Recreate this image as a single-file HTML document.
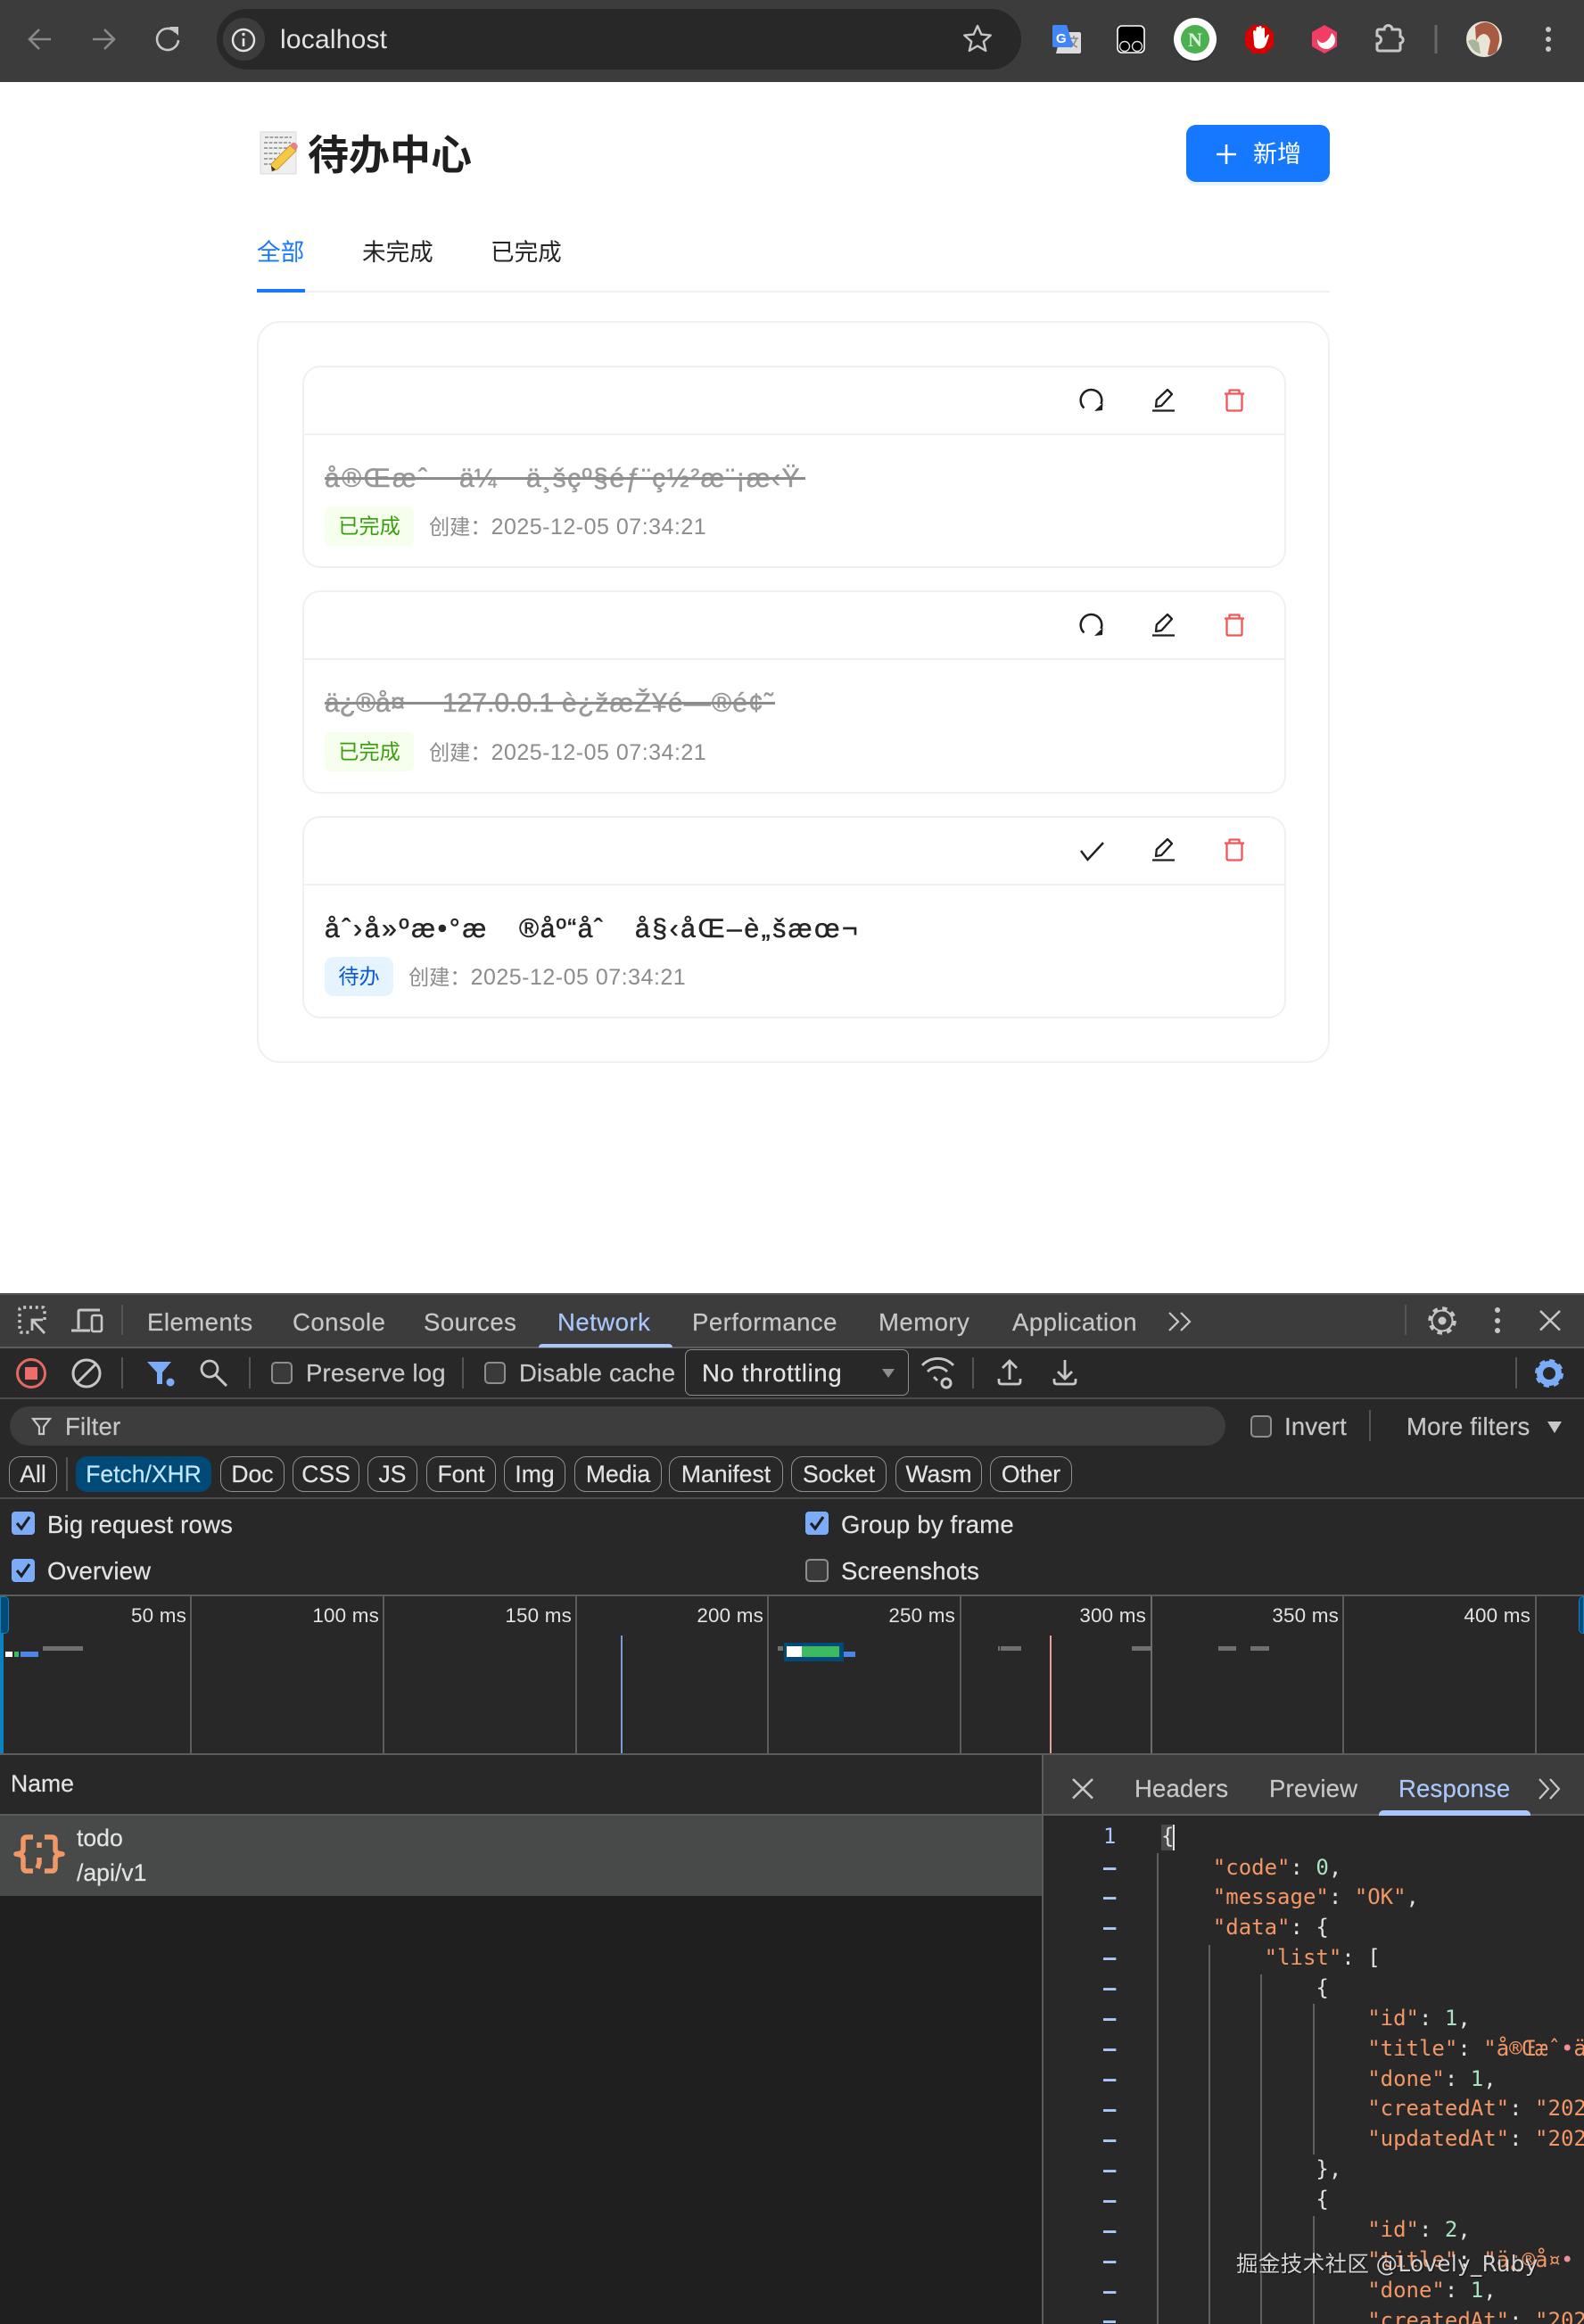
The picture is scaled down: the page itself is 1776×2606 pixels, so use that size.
<!DOCTYPE html>
<html lang="zh"><head><meta charset="utf-8"><title>localhost</title>
<style>
html,body{margin:0;padding:0;background:#fff}
body{position:relative;width:1776px;height:2606px;overflow:hidden;font-family:"Liberation Sans","Noto Sans CJK SC",sans-serif}
.b{position:absolute;box-sizing:border-box}
.t{position:absolute;white-space:pre;line-height:40px;height:40px}
.d{font-size:27.5px;color:#c7c7c7;letter-spacing:.2px;-webkit-text-stroke:.2px currentColor}
.tab{letter-spacing:.5px}
.w{color:#e3e3e3;-webkit-text-stroke:.2px currentColor}
.card{position:absolute;left:339px;width:1103px;box-sizing:border-box;border:2px solid #f0f0f0;border-radius:20px;background:#fff}
.m{font-size:30px;-webkit-text-stroke:.5px currentColor}
.g{color:#999}
.k3{color:#262626}
.strike{position:absolute;height:3px;background:#8c8c8c}
.tag{position:absolute;left:364px;height:44px;line-height:44px;font-size:23.2px;text-align:center;border-radius:7px}
.tg{width:100px;background:#f6ffed;color:#389e0d}
.tb{width:77px;background:#e6f4ff;color:#0958d9;border-radius:10px}
.cr{font-size:23.2px;color:#8c8c8c}
.cr span{font-size:25px;letter-spacing:.5px}
.chip{position:absolute;top:1633px;height:40px;line-height:39px;box-sizing:border-box;border:1.5px solid #8e8e8e;border-radius:13px;text-align:center;font-size:26.5px;color:#e3e3e3;-webkit-text-stroke:.2px currentColor}
.cb{position:absolute;box-sizing:border-box;width:24px;height:25px;border:2px solid #8e8e8e;border-radius:5px;background:#3a3a3a}
.cc{position:absolute;box-sizing:border-box;width:26px;height:26px;border-radius:4px;background:#7cacf8}
.v{position:absolute;width:2px;background:#5c5c5c}
.o{font-size:22.4px;letter-spacing:.2px;color:#e3e3e3;text-align:right;width:90px;top:1792px}
.r{position:absolute}
#code{position:absolute;left:1302px;top:0;width:474px;height:2606px;overflow:hidden;font-family:"DejaVu Sans Mono","Liberation Mono",monospace;font-size:24px}
.l{position:absolute;left:0;white-space:pre;line-height:34px;height:34px;color:#e3e3e3}
.k{color:#f29766}.n{color:#a8e2c0}.p{color:#f28b9a}
.ln{position:absolute;left:1237px;font-family:"DejaVu Sans Mono","Liberation Mono",monospace;font-size:23.8px;font-weight:700;line-height:34px;height:34px;color:#a8c7fa}
</style></head><body>

<!-- browser chrome -->
<div class="b" style="left:0;top:0;width:1776px;height:92px;background:#3c3c3c"></div>
<div class="b" style="left:243px;top:10px;width:902px;height:68px;background:#282828;border-radius:34px"></div>
<div class="b" style="left:250px;top:20px;width:47px;height:48px;background:#3c3c3c;border-radius:24px"></div>
<div class="t" style="left:314px;top:25px;font-size:30px;color:#e3e3e3;letter-spacing:.2px">localhost</div>

<!-- page -->
<div class="t" style="left:345px;top:150px;font-size:46px;line-height:48px;height:48px;font-weight:700;color:#1f1f1f">待办中心</div>
<div class="b" style="left:1330px;top:140px;width:161px;height:64px;background:#1677ff;border-radius:11px;box-shadow:0 4px 0 #e6f4ff"></div>
<div class="t" style="left:1405px;top:153px;font-size:27px;color:#fff">新增</div>
<div class="t" style="left:288px;top:263px;font-size:26.6px;color:#1677ff">全部</div>
<div class="t" style="left:406px;top:263px;font-size:26.6px;color:#262626">未完成</div>
<div class="t" style="left:550px;top:263px;font-size:26.6px;color:#262626">已完成</div>
<div class="b" style="left:288px;top:326px;width:1203px;height:2px;background:#f0f0f0"></div>
<div class="b" style="left:288px;top:324px;width:54px;height:4px;background:#1677ff"></div>

<div class="b" style="left:288px;top:360px;width:1203px;height:832px;border:2px solid #f0f0f0;border-radius:26px;background:#fff"></div>

<div class="card" style="top:410px;height:227px"></div>
<div class="b" style="left:340px;top:486px;width:1101px;height:2px;background:#f0f0f0"></div>
<div class="t m g" style="left:364px;top:517px;letter-spacing:2.4px">å®Œæˆ</div>
<div class="t m g" style="left:515px;top:517px">ä¼</div>
<div class="t m g" style="left:590px;top:517px;letter-spacing:1.5px">ä¸šçº§éƒ¨ç½²æ¨¡æ‹Ÿ</div>
<div class="strike" style="left:364px;top:535px;width:539px"></div>
<div class="tag tg" style="top:568px">已完成</div>
<div class="t cr" style="left:481px;top:571px">创建：<span>2025-12-05 07:34:21</span></div>

<div class="card" style="top:662px;height:228px"></div>
<div class="b" style="left:340px;top:738px;width:1101px;height:2px;background:#f0f0f0"></div>
<div class="t m g" style="left:364px;top:769px">ä¿®å¤</div>
<div class="t m g" style="left:496px;top:769px">127.0.0.1</div>
<div class="t m g" style="left:630px;top:769px;letter-spacing:1.2px">è¿žæŽ¥é—®é¢˜</div>
<div class="strike" style="left:364px;top:787px;width:505px"></div>
<div class="tag tg" style="top:821px">已完成</div>
<div class="t cr" style="left:481px;top:824px">创建：<span>2025-12-05 07:34:21</span></div>

<div class="card" style="top:915px;height:227px"></div>
<div class="b" style="left:340px;top:991px;width:1101px;height:2px;background:#f0f0f0"></div>
<div class="t m k3" style="left:364px;top:1022px;letter-spacing:2.7px">åˆ›å»ºæ•°æ</div>
<div class="t m k3" style="left:582px;top:1022px;letter-spacing:1.5px">®åº“åˆ</div>
<div class="t m k3" style="left:712px;top:1022px;letter-spacing:2.6px">å§‹åŒ–è„šæœ¬</div>
<div class="tag tb" style="top:1073px">待办</div>
<div class="t cr" style="left:458px;top:1076px">创建：<span>2025-12-05 07:34:21</span></div>

<!-- devtools backgrounds -->
<div class="b" style="left:0;top:1450px;width:1776px;height:1156px;background:#282828"></div>
<div class="b" style="left:0;top:1450px;width:1776px;height:60px;background:#3c3c3c"></div>
<div class="b" style="left:0;top:1450px;width:1776px;height:2px;background:#555"></div>
<div class="b" style="left:0;top:1510px;width:1776px;height:2px;background:#5c5c5c"></div>
<div class="b" style="left:0;top:1567px;width:1776px;height:2px;background:#4c4c4c"></div>
<div class="b" style="left:0;top:1679px;width:1776px;height:2px;background:#4c4c4c"></div>
<div class="b" style="left:0;top:1788px;width:1776px;height:2px;background:#5c5c5c"></div>
<div class="b" style="left:0;top:1966px;width:1776px;height:2px;background:#5c5c5c"></div>

<div class="t d tab" style="left:165px;top:1463px">Elements</div>
<div class="t d tab" style="left:328px;top:1463px">Console</div>
<div class="t d tab" style="left:475px;top:1463px">Sources</div>
<div class="t d tab" style="left:625px;top:1463px;color:#a8c7fa">Network</div>
<div class="t d tab" style="left:776px;top:1463px">Performance</div>
<div class="t d tab" style="left:985px;top:1463px">Memory</div>
<div class="t d tab" style="left:1135px;top:1463px">Application</div>
<div class="b" style="left:604px;top:1507px;width:150px;height:4px;background:#a8c7fa;border-radius:4px 4px 0 0"></div>

<div class="cb" style="left:304px;top:1527px"></div>
<div class="t d" style="left:343px;top:1520px">Preserve log</div>
<div class="cb" style="left:543px;top:1527px"></div>
<div class="t d" style="left:582px;top:1520px">Disable cache</div>
<div class="b" style="left:768px;top:1513px;width:251px;height:52px;border:1.5px solid #8e8e8e;border-radius:7px"></div>
<div class="t d" style="left:787px;top:1520px;color:#e3e3e3;letter-spacing:.7px">No throttling</div>

<div class="b" style="left:11px;top:1577px;width:1363px;height:44px;background:#3d3d3d;border-radius:22px"></div>
<div class="t d" style="left:73px;top:1580px">Filter</div>
<div class="cb" style="left:1402px;top:1587px"></div>
<div class="t d" style="left:1440px;top:1580px">Invert</div>
<div class="t d" style="left:1577px;top:1580px">More filters</div>

<div class="chip" style="left:10px;width:54px">All</div>
<div class="chip" style="left:85px;width:152px;background:#004a77;border-color:#004a77;color:#c2e7ff">Fetch/XHR</div>
<div class="chip" style="left:247px;width:72px">Doc</div>
<div class="chip" style="left:328px;width:75px">CSS</div>
<div class="chip" style="left:412px;width:56px">JS</div>
<div class="chip" style="left:478px;width:78px">Font</div>
<div class="chip" style="left:565px;width:69px">Img</div>
<div class="chip" style="left:644px;width:98px">Media</div>
<div class="chip" style="left:750px;width:128px">Manifest</div>
<div class="chip" style="left:887px;width:107px">Socket</div>
<div class="chip" style="left:1004px;width:97px">Wasm</div>
<div class="chip" style="left:1110px;width:92px">Other</div>

<div class="cc" style="left:13px;top:1695px"></div>
<div class="t d" style="left:53px;top:1690px;color:#e3e3e3">Big request rows</div>
<div class="cc" style="left:13px;top:1748px"></div>
<div class="t d" style="left:53px;top:1742px;color:#e3e3e3">Overview</div>
<div class="cc" style="left:903px;top:1695px"></div>
<div class="t d" style="left:943px;top:1690px;color:#e3e3e3">Group by frame</div>
<div class="cb" style="left:903px;top:1748px;width:26px;height:26px"></div>
<div class="t d" style="left:943px;top:1742px;color:#e3e3e3">Screenshots</div>

<!-- overview -->
<div class="v" style="left:213px;top:1790px;height:176px"></div>
<div class="v" style="left:429px;top:1790px;height:176px"></div>
<div class="v" style="left:645px;top:1790px;height:176px"></div>
<div class="v" style="left:860px;top:1790px;height:176px"></div>
<div class="v" style="left:1076px;top:1790px;height:176px"></div>
<div class="v" style="left:1290px;top:1790px;height:176px;background:#6c6c6c"></div>
<div class="v" style="left:1505px;top:1790px;height:176px"></div>
<div class="v" style="left:1721px;top:1790px;height:176px"></div>
<div class="t o" style="left:119px">50 ms</div>
<div class="t o" style="left:335px">100 ms</div>
<div class="t o" style="left:551px">150 ms</div>
<div class="t o" style="left:766px">200 ms</div>
<div class="t o" style="left:981px">250 ms</div>
<div class="t o" style="left:1195px">300 ms</div>
<div class="t o" style="left:1411px">350 ms</div>
<div class="t o" style="left:1626px">400 ms</div>

<div class="r" style="left:0;top:1790px;width:4px;height:176px;background:#0a82c4"></div>
<div class="r" style="left:0;top:1790px;width:10px;height:42px;background:#004a77;border:1px solid #0a82c4;box-sizing:border-box;border-radius:0 5px 5px 0"></div>
<div class="r" style="left:1770px;top:1790px;width:6px;height:42px;background:#004a77;border:1px solid #0a82c4;box-sizing:border-box;border-radius:5px 0 0 5px"></div>
<div class="r" style="left:6px;top:1852px;width:8px;height:6px;background:#fff"></div>
<div class="r" style="left:16px;top:1852px;width:5px;height:6px;background:#3dbb63"></div>
<div class="r" style="left:23px;top:1852px;width:20px;height:6px;background:#4d84e6"></div>
<div class="r" style="left:48px;top:1846px;width:45px;height:5px;background:#707070"></div>
<div class="r" style="left:696px;top:1834px;width:2px;height:132px;background:#7b9bd9"></div>
<div class="r" style="left:1177px;top:1834px;width:2px;height:132px;background:#e8a09a"></div>
<div class="r" style="left:872px;top:1846px;width:6px;height:5px;background:#707070"></div>
<div class="r" style="left:879px;top:1842px;width:67px;height:21px;background:#004a77"></div>
<div class="r" style="left:882px;top:1846px;width:17px;height:12px;background:#fff"></div>
<div class="r" style="left:899px;top:1846px;width:42px;height:12px;background:#3dbb63"></div>
<div class="r" style="left:946px;top:1852px;width:13px;height:6px;background:#4d84e6"></div>
<div class="r" style="left:1119px;top:1846px;width:2px;height:5px;background:#707070"></div>
<div class="r" style="left:1122px;top:1846px;width:23px;height:5px;background:#707070"></div>
<div class="r" style="left:1269px;top:1846px;width:22px;height:5px;background:#707070"></div>
<div class="r" style="left:1366px;top:1846px;width:20px;height:5px;background:#707070"></div>
<div class="r" style="left:1402px;top:1846px;width:21px;height:5px;background:#707070"></div>

<!-- name list -->
<div class="b" style="left:0;top:2036px;width:1169px;height:570px;background:#1f1f1f"></div>
<div class="b" style="left:0;top:2034px;width:1776px;height:2px;background:#5c5c5c"></div>
<div class="b" style="left:0;top:2036px;width:1169px;height:90px;background:#484a4a"></div>
<div class="t w" style="left:12px;top:1980px;font-size:26.6px">Name</div>
<div class="t w" style="left:86px;top:2041px;font-size:26.6px">todo</div>
<div class="t w" style="left:86px;top:2080px;font-size:26.6px">/api/v1</div>

<!-- right panel -->
<div class="b" style="left:1170px;top:1968px;width:606px;height:66px;background:#3c3c3c"></div>
<div class="b" style="left:1168px;top:1968px;width:2px;height:638px;background:#5c5c5c"></div>
<div class="t d" style="left:1272px;top:1986px">Headers</div>
<div class="t d" style="left:1423px;top:1986px">Preview</div>
<div class="t d" style="left:1568px;top:1986px;color:#a8c7fa">Response</div>
<div class="b" style="left:1546px;top:2030px;width:170px;height:6px;background:#a8c7fa;border-radius:5px 5px 0 0"></div>

<!-- indent guides -->
<div class="r" style="left:1297px;top:2078px;width:2px;height:528px;background:#5f5f5f"></div>
<div class="r" style="left:1355px;top:2181px;width:2px;height:425px;background:#5f5f5f"></div>
<div class="r" style="left:1413px;top:2214px;width:2px;height:392px;background:#5f5f5f"></div>
<div class="r" style="left:1472px;top:2247px;width:2px;height:169px;background:#5f5f5f"></div>
<div class="r" style="left:1472px;top:2485px;width:2px;height:121px;background:#5f5f5f"></div>
<div class="r" style="left:1302px;top:2046px;width:14px;height:29px;background:#4a4a4a"></div>
<div class="r" style="left:1315px;top:2046px;width:2px;height:29px;background:#e3e3e3"></div>

<div class="ln" style="top:2042px;font-weight:400">1</div>
<div class="ln" style="top:2077px">–</div>
<div class="ln" style="top:2110px">–</div>
<div class="ln" style="top:2144px">–</div>
<div class="ln" style="top:2178px">–</div>
<div class="ln" style="top:2212px">–</div>
<div class="ln" style="top:2246px">–</div>
<div class="ln" style="top:2280px">–</div>
<div class="ln" style="top:2314px">–</div>
<div class="ln" style="top:2348px">–</div>
<div class="ln" style="top:2382px">–</div>
<div class="ln" style="top:2416px">–</div>
<div class="ln" style="top:2450px">–</div>
<div class="ln" style="top:2484px">–</div>
<div class="ln" style="top:2518px">–</div>
<div class="ln" style="top:2552px">–</div>
<div class="ln" style="top:2585px;height:21px;overflow:hidden">–</div>

<div id="code">
<div class="l" style="top:2042px">{</div>
<div class="l" style="top:2077px">    <span class="k">"code"</span>: <span class="n">0</span>,</div>
<div class="l" style="top:2110px">    <span class="k">"message"</span>: <span class="k">"OK"</span>,</div>
<div class="l" style="top:2144px">    <span class="k">"data"</span>: {</div>
<div class="l" style="top:2178px">        <span class="k">"list"</span>: [</div>
<div class="l" style="top:2212px">            {</div>
<div class="l" style="top:2246px">                <span class="k">"id"</span>: <span class="n">1</span>,</div>
<div class="l" style="top:2280px">                <span class="k">"title"</span>: <span class="k">"å®Œæˆ</span><span class="p">•</span><span class="k">ä</span></div>
<div class="l" style="top:2314px">                <span class="k">"done"</span>: <span class="n">1</span>,</div>
<div class="l" style="top:2347px">                <span class="k">"createdAt"</span>: <span class="k">"202</span></div>
<div class="l" style="top:2381px">                <span class="k">"updatedAt"</span>: <span class="k">"202</span></div>
<div class="l" style="top:2415px">            },</div>
<div class="l" style="top:2449px">            {</div>
<div class="l" style="top:2483px">                <span class="k">"id"</span>: <span class="n">2</span>,</div>
<div class="l" style="top:2517px">                <span class="k">"title"</span>: <span class="k">"ä¿®å¤</span><span class="p">•</span></div>
<div class="l" style="top:2551px">                <span class="k">"done"</span>: <span class="n">1</span>,</div>
<div class="l" style="top:2585px;height:21px;overflow:hidden">                <span class="k">"createdAt"</span>: <span class="k">"202</span></div>
</div>

<div class="t" style="left:1386px;top:2519px;font-size:24.5px;color:#d4d4d4;text-shadow:1px 1px 1px #111;letter-spacing:.4px">掘金技术社区 <span style='font-family:"DejaVu Sans",sans-serif'>@Lovely_Ruby</span></div>

<!-- icon overlay -->
<svg class="r" style="left:0;top:0" width="1776" height="2606" viewBox="0 0 1776 2606" fill="none">
<!-- chrome nav -->
<g stroke="#8a8a8a" stroke-width="2.6">
<path d="M57 44H34M44 33 33 44l11 11"/>
<path d="M104 44h23M117 33l11 11-11 11"/>
</g>
<g stroke="#c7c7c7" stroke-width="2.6">
<path d="M197 36a12 12 0 1 0 3 9"/>
</g>
<path d="M190 30h10v10z" fill="#c7c7c7"/>
<circle cx="273" cy="45" r="12" stroke="#e3e3e3" stroke-width="2.4"/>
<path d="M273 43v9" stroke="#e3e3e3" stroke-width="2.6"/><circle cx="273" cy="38.5" r="1.7" fill="#e3e3e3"/>
<path d="M1096 29l4.3 9.6 10.4 1-7.9 7 2.4 10.3-9.2-5.4-9.2 5.4 2.4-10.3-7.9-7 10.4-1z" stroke="#c7c7c7" stroke-width="2.4" stroke-linejoin="round"/>
<!-- extensions -->
<path d="M1190 36h20q2 0 2 2v20q0 2-2 2h-26z" fill="#dcdcdc"/>
<path d="M1199 43h10M1204 40v3M1207 43q-2 7-7 10M1201 46q2 5 7 7" stroke="#888" stroke-width="1.5"/>
<path d="M1180 30q0-2 2-2h14l7 23 -1 2h-20q-2 0-2-2z" fill="#4285f4"/>
<text x="1184" y="48" font-family="Liberation Sans" font-weight="700" font-size="15" fill="#fff">G</text>
<rect x="1253" y="29" width="30" height="30" rx="5" fill="#000" stroke="#fff" stroke-width="1.6"/>
<circle cx="1261" cy="52" r="5.5" stroke="#ddd" stroke-width="1.4"/><circle cx="1275" cy="52" r="5.5" stroke="#ddd" stroke-width="1.4"/>
<circle cx="1340" cy="46" r="24" fill="#000" opacity=".2"/>
<circle cx="1340" cy="44" r="24" fill="#fff"/><circle cx="1340" cy="44" r="16" fill="#4caf50"/>
<text x="1340" y="52" text-anchor="middle" font-family="Liberation Serif" font-weight="700" font-size="22" fill="#dff5df">N</text>
<path d="M1405 28h14l9 9v14l-9 9h-14l-9-9V37z" fill="#d80000"/>
<path d="M1405 36q0-2 1.500-2t1.500 2l.5-4q0-2 1.500-2t1.500 2v-1q0-2 1.500-2t1.500 2l.5 2q0-2 1.500-2t1.500 2v9q0 1 1 0l2-3q1.500-1 2 .5l-3 9q-2 6-7 6h-2q-5 0-5-6z" fill="#fff"/>
<path d="M1485 28l14 8v16l-14 8-14-8V36z" fill="#f23d65"/>
<path d="M1493 37a10 10 0 1 1-16 7q4 6 9 3t7-10z" fill="#fff"/>
<path d="M1546 33h6a4.500 4.500 0 0 1 9 0h7a2 2 0 0 1 2 2v6a3.800 3.800 0 0 1 0 7.500V55a2 2 0 0 1-2 2h-22a2 2 0 0 1-2-2v-6a4.500 4.500 0 0 0 0-9v-5a2 2 0 0 1 2-2z" stroke="#c7c7c7" stroke-width="3"/>
<path d="M1610 28v32" stroke="#666" stroke-width="3"/>
<circle cx="1664" cy="44" r="20" fill="#e8e4d6"/>
<path d="M1654 30q10-9 20-2 8 6 7 18l-3 12q-8 6-10 3l3-15q-2-8-8-8-6 2-8 8z" fill="#a85a42"/>
<path d="M1646 46q6-4 12 2l2 12q-8 0-14-14z" fill="#a9b59a"/>
<circle cx="1736" cy="33" r="3" fill="#c7c7c7"/><circle cx="1736" cy="44" r="3" fill="#c7c7c7"/><circle cx="1736" cy="55" r="3" fill="#c7c7c7"/>

<!-- emoji note -->
<rect x="292" y="148" width="40" height="47" fill="#efefef" stroke="#dadada"/>
<g stroke="#777" stroke-width="1.2" stroke-dasharray="4 1.500">
<path d="M297 154h30M296 160h30M296 166h27M296 172h18M296 178h13M296 184h9"/>
</g>
<path d="M305 192l-1-8 21-21 7 6-21 21z" fill="#f6c945" stroke="#b8892a" stroke-width=".8"/>
<path d="M325 163l3-3q2-1 4 1l2 3-2 5z" fill="#e8808a"/>
<path d="M305 192l-1-6 5 4z" fill="#333"/>
<!-- plus -->
<path d="M1375 162v22M1364 173h22" stroke="#fff" stroke-width="2.6"/>

<!-- action icons -->
<g id="ic">
<g stroke="#1f1f1f" stroke-width="2.500">
<path d="M1215.500 457.500a11.800 11.800 0 1 1 19-4.500"/>
</g>
<path d="M1227 461l9-1 .5-8z" fill="#1f1f1f"/>
<g stroke="#1f1f1f" stroke-width="2.300" stroke-linejoin="round">
<path d="M1296 456l.8-7.500 12.200-11.500 5 5-11.800 13z"/>
<path d="M1292 460.500h25"/>
</g>
<g stroke="#f0565a" stroke-width="2.300" stroke-linejoin="round">
<path d="M1373 441.500h22M1378.500 441.500v-4h11v4M1375.500 441.500v17q0 2 2 2h13q2 0 2-2v-17"/>
</g>
</g>
<g transform="translate(0 252)">
<g stroke="#1f1f1f" stroke-width="2.500"><path d="M1215.500 457.500a11.800 11.800 0 1 1 19-4.500"/></g>
<path d="M1227 461l9-1 .5-8z" fill="#1f1f1f"/>
<g stroke="#1f1f1f" stroke-width="2.300" stroke-linejoin="round"><path d="M1296 456l.8-7.500 12.200-11.500 5 5-11.800 13z"/><path d="M1292 460.500h25"/></g>
<g stroke="#f0565a" stroke-width="2.300" stroke-linejoin="round"><path d="M1373 441.500h22M1378.500 441.500v-4h11v4M1375.500 441.500v17q0 2 2 2h13q2 0 2-2v-17"/></g>
</g>
<g transform="translate(0 504)">
<path d="M1212 450l7.500 10 17.500-19" stroke="#1f1f1f" stroke-width="2.400"/>
<g stroke="#1f1f1f" stroke-width="2.300" stroke-linejoin="round"><path d="M1296 456l.8-7.500 12.200-11.500 5 5-11.800 13z"/><path d="M1292 460.500h25"/></g>
<g stroke="#f0565a" stroke-width="2.300" stroke-linejoin="round"><path d="M1373 441.500h22M1378.500 441.500v-4h11v4M1375.500 441.500v17q0 2 2 2h13q2 0 2-2v-17"/></g>
</g>

<!-- devtools toolbar icons -->
<path d="M50 1480v-12q0-2-2-2H24q-2 0-2 2v24q0 2 2 2h10" stroke="#c7c7c7" stroke-width="3.400" stroke-dasharray="3 3.800"/>
<path d="M50 1495 36 1480M36 1492v-12h12" stroke="#c7c7c7" stroke-width="2.800"/>
<path d="M88 1490v-19q0-2 2-2h22M80 1492h21" stroke="#c7c7c7" stroke-width="3"/>
<rect x="103" y="1475" width="11" height="18" rx="2" stroke="#c7c7c7" stroke-width="2.600"/>
<path d="M137 1463v34M137 1522v35M280 1522v35M519 1522v35M1091 1522v35M1700 1522v35M75 1634v38M1576 1463v34M1536 1581v35" stroke="#555" stroke-width="2"/>
<path d="M1311 1472l10 10-10 10M1324 1472l10 10-10 10" stroke="#c7c7c7" stroke-width="2.200"/>
<circle cx="1617" cy="1481" r="11.500" stroke="#c7c7c7" stroke-width="2"/>
<circle cx="1617" cy="1481" r="14" stroke="#c7c7c7" stroke-width="3.500" stroke-dasharray="5.500 5.500"/>
<circle cx="1617" cy="1481" r="4.500" fill="#c7c7c7"/>
<circle cx="1679" cy="1469" r="3" fill="#c7c7c7"/><circle cx="1679" cy="1481" r="3" fill="#c7c7c7"/><circle cx="1679" cy="1492" r="3" fill="#c7c7c7"/>
<path d="M1727 1470l22 21.500M1749 1470l-22 21.500" stroke="#c7c7c7" stroke-width="2.600"/>

<circle cx="35" cy="1540" r="15.500" stroke="#e46962" stroke-width="3"/>
<rect x="28" y="1533" width="14" height="14" fill="#ee6d6a"/>
<circle cx="97" cy="1540" r="15" stroke="#c7c7c7" stroke-width="3"/>
<path d="M86 1551l22-22" stroke="#c7c7c7" stroke-width="3"/>
<path d="M165 1527h27l-10 12v13h-6v-13z" fill="#7cacf8"/>
<circle cx="191" cy="1550" r="4.500" fill="#7cacf8"/>
<circle cx="235" cy="1535" r="9" stroke="#c7c7c7" stroke-width="2.800"/>
<path d="M242 1542l12 12" stroke="#c7c7c7" stroke-width="3"/>
<path d="M989 1535h14l-7 10z" fill="#8e8e8e"/>
<path d="M1034 1531a24 24 0 0 1 35 0M1040 1538a15 15 0 0 1 22 0M1047 1544l4 4" stroke="#c7c7c7" stroke-width="2.800"/>
<circle cx="1061" cy="1551" r="5" stroke="#c7c7c7" stroke-width="3"/>
<g stroke="#c7c7c7" stroke-width="2.800">
<path d="M1132 1547v-21M1124 1534l8-8 8 8M1120 1546v3q0 3 3 3h18q3 0 3-3v-3"/>
<path d="M1194 1525v21M1186 1538l8 8 8-8M1182 1546v3q0 3 3 3h18q3 0 3-3v-3"/>
</g>
<circle cx="1737" cy="1540" r="10.500" stroke="#7cacf8" stroke-width="7"/>
<circle cx="1737" cy="1540" r="14" stroke="#7cacf8" stroke-width="4" stroke-dasharray="6 5"/>
<path d="M37 1591h19l-7 9v8h-5v-8z" stroke="#c7c7c7" stroke-width="2.200"/>
<path d="M1735 1594h16l-8 13z" fill="#c7c7c7"/>
<!-- checks -->
<g stroke="#1f1f1f" stroke-width="3.200">
<path d="M19 1708l5 6 9-13"/><path d="M19 1761l5 6 9-13"/><path d="M909 1708l5 6 9-13"/>
</g>
<!-- fetch icon -->
<g stroke="#f29766" stroke-width="5.500" stroke-linejoin="round">
<path d="M37 2060h-7q-4 0-4 4v10q0 4-8 5 8 1 8 5v10q0 4 4 4h7"/>
<path d="M50 2060h8q4 0 4 4v10q0 4 8 5-8 1-8 5v10q0 4-4 4h-8"/>
<path d="M44 2066v6M44 2083v6l-2 6"/>
</g>
<!-- response panel -->
<path d="M1203 1995l22 21.500M1225 1995l-22 21.500" stroke="#c7c7c7" stroke-width="2.600"/>
<path d="M1726 1995l10 11-10 11M1738 1995l10 11-10 11" stroke="#c7c7c7" stroke-width="2.200"/>
</svg>
</body></html>
